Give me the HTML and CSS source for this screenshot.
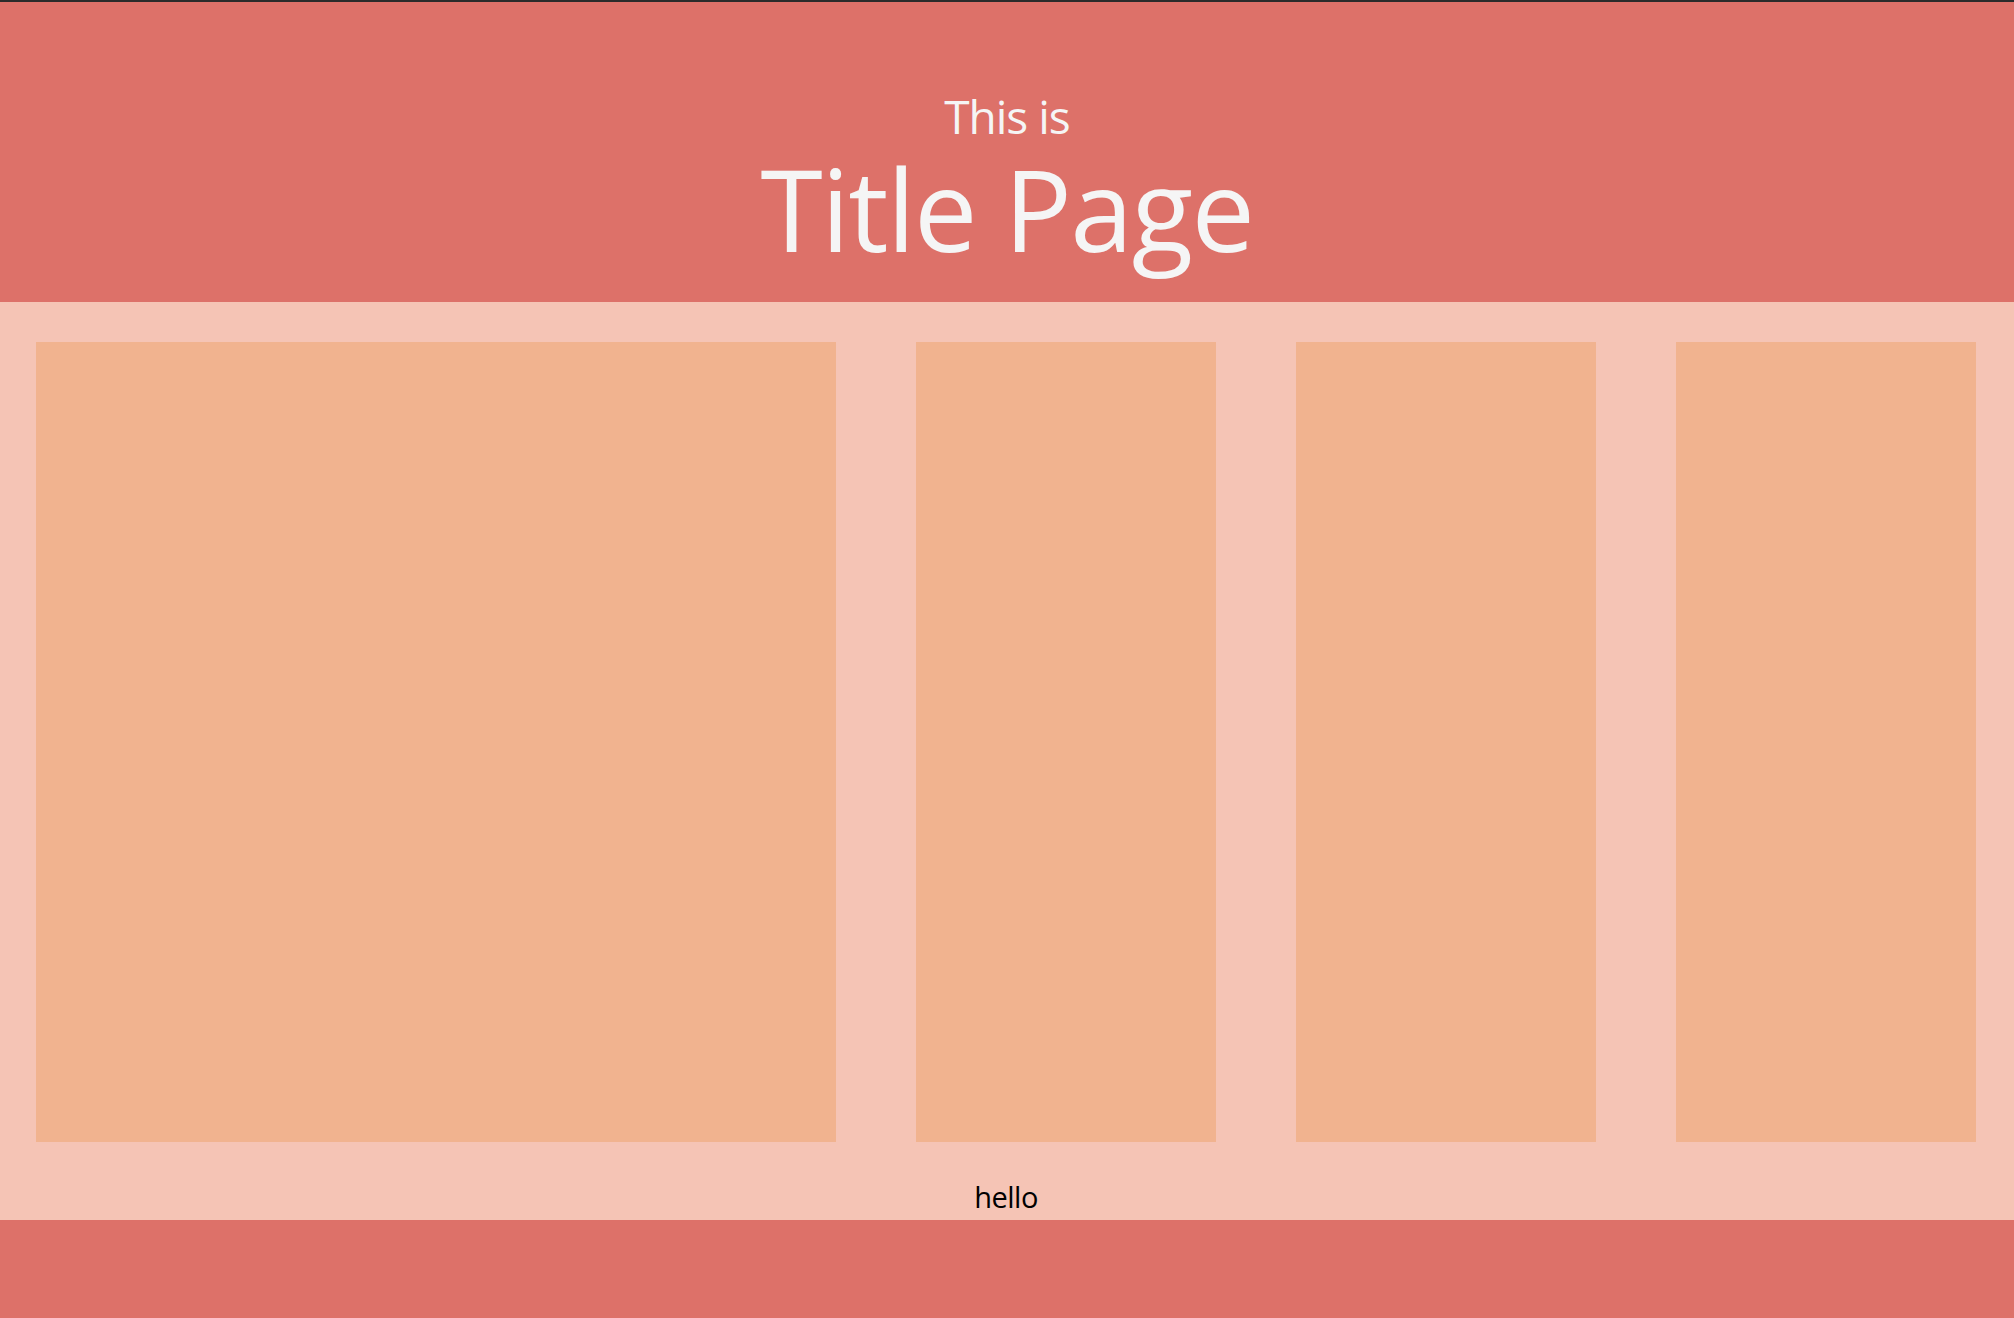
FILE: index.html
```html
<!DOCTYPE html>
<html>
<head>
<meta charset="utf-8">
<link rel="stylesheet" href="styles.css">
</head>
<body>
<header class="hero">
  <div class="hero-sub">This is</div>
  <h1 class="hero-title">Title Page</h1>
</header>
<main class="content">
  <div class="cards">
    <div class="card"></div>
    <div class="card"></div>
    <div class="card"></div>
    <div class="card"></div>
  </div>
  <p class="note">hello</p>
</main>
<footer class="footer"></footer>
</body>
</html>
```
FILE: styles.css
```css
html, body {
  margin: 0;
  padding: 0;
}
body {
  font-family: "Open Sans", "Noto Sans", sans-serif;
  background: #f5c4b5;
  border-top: 2px solid #2b2b2b;
}
.hero {
  background: #dd7169;
  height: 300px;
  display: flex;
  flex-direction: column;
  align-items: center;
  color: #f5f5f5;
}
.hero-sub {
  font-size: 46px;
  line-height: 1;
  letter-spacing: -1px;
  margin-top: 91px;
}
.hero-title {
  font-size: 113px;
  font-weight: 400;
  line-height: 1;
  letter-spacing: -1.5px;
  margin: 13px 0 0 0;
}
.content {
  padding: 40px 38px 0 36px;
}
.cards {
  display: grid;
  grid-template-columns: 800px 300px 300px 300px;
  column-gap: 80px;
}
.card {
  background: #f1b38f;
  height: 800px;
}
.note {
  margin: 0;
  height: 78px;
  padding-top: 40px;
  box-sizing: border-box;
  text-align: center;
  font-size: 29px;
  line-height: 29px;
  letter-spacing: -0.5px;
  color: #000;
}
.footer {
  background: #dd7169;
  height: 98px;
}
```
